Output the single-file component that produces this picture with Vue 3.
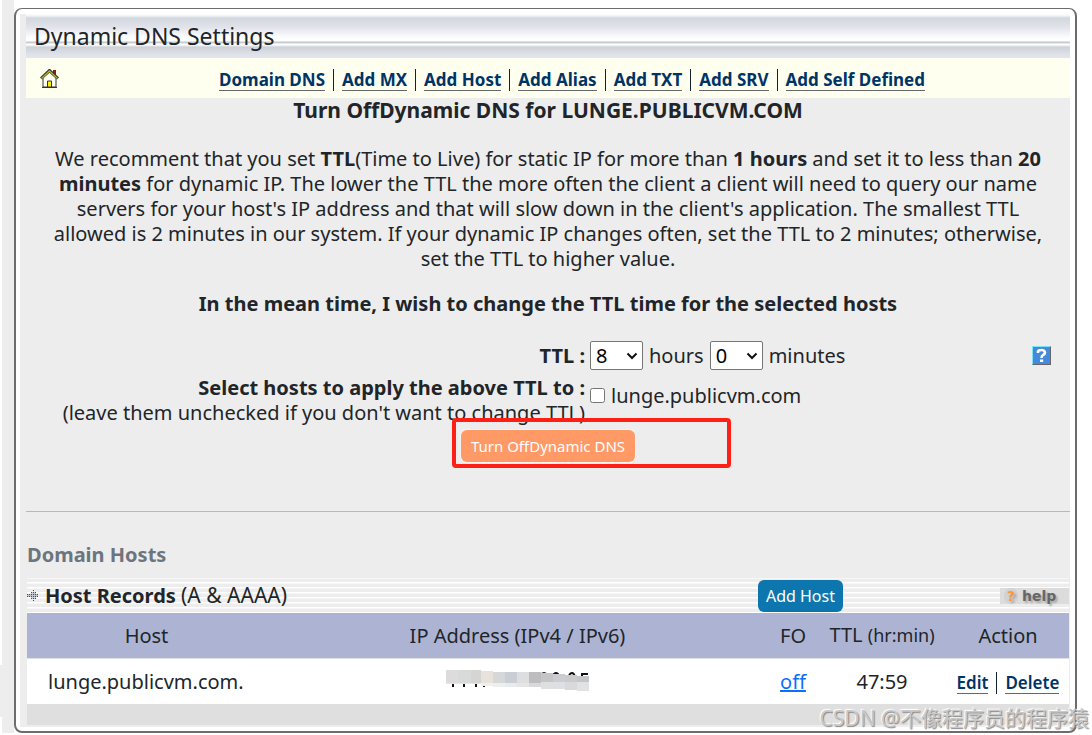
<script setup>
import { ref } from 'vue'

const links = ['Domain DNS', 'Add MX', 'Add Host', 'Add Alias', 'Add TXT', 'Add SRV', 'Add Self Defined']
const hours = ref('8')
const minutes = ref('0')
const applyHost = ref(false)
const hourOptions = Array.from({ length: 24 }, (_, i) => String(i))
const minuteOptions = Array.from({ length: 60 }, (_, i) => String(i))

const arrowDots = [
  [6, 0], [6, 10], [4, 2], [6, 2], [8, 2], [4, 8], [6, 8], [8, 8],
  [0, 4], [2, 4], [4, 4], [6, 4], [8, 4], [10, 4],
  [0, 6], [2, 6], [4, 6], [6, 6], [8, 6], [10, 6]
]

const mosaic = [
  [0, 0, 12, 13, '#dcdcdc'], [12, 0, 13, 13, '#d8d9d9'], [25, 0, 10, 14, '#d5d6d4'],
  [35, 1, 12, 12, '#e8e2dd'], [47, 2, 12, 11, '#d6d7d9'], [59, 2, 12, 11, '#c9cdd4'],
  [71, 2, 12, 11, '#dddee0'], [83, 2, 12, 11, '#bdbdbf'], [95, 3, 12, 10, '#c5c5c7'],
  [107, 4, 12, 9, '#cccdd0'], [119, 5, 12, 8, '#cbcbcd'], [131, 6, 12, 7, '#c5c6c8'],
  [0, 13, 35, 1, '#e6e6e6'],
  [35, 13, 12, 3, '#f4eeea'], [47, 13, 12, 4, '#edeeee'], [59, 13, 12, 4, '#e8eaeb'],
  [71, 13, 12, 4, '#e5e5e5'], [83, 13, 12, 4, '#d9d9da'], [95, 12, 12, 7, '#dedfe1'],
  [107, 12, 12, 7, '#dedfe2'], [119, 12, 12, 8, '#d9d9db'], [131, 12, 12, 9, '#e1e2e4']
]
</script>

<template>
  <div class="page">
    <div class="gutter"><i></i><i></i></div>
    <main class="panel">
      <div class="inner">
        <h1>Dynamic DNS Settings</h1>
        <nav>
          <a class="home" href="#" aria-label="Home">
            <svg width="19" height="19" viewBox="0 0 19 19">
              <path d="M13 1h3v7l-3-3z" fill="#8b1a1a" />
              <path d="M3 9 9.500 3 16 9v9H3z" fill="#fffff4" stroke="#333" />
              <path d="M1 9.500 9.500 1.500 18 9.500" fill="none" stroke="#333" stroke-width="3" />
              <path d="M1.500 9.500 9.500 2 17.500 9.500" fill="none" stroke="#b5b51c" stroke-width="1.300" />
              <path d="M7.500 18v-6h4v6z" fill="#ffee00" stroke="#333" />
              <path d="M2 18.500h15" stroke="#333" />
            </svg>
          </a>
          <div class="links">
            <template v-for="(l, i) in links" :key="l">
              <b v-if="i" class="bar"></b><a class="link" href="#">{{ l }}</a>
            </template>
          </div>
        </nav>
        <form @submit.prevent>
          <h2>Turn OffDynamic DNS for LUNGE.PUBLICVM.COM</h2>
          <p class="intro">
            We recomment that you set <b>TTL</b>(Time to Live) for static IP for more than <b>1 hours</b> and set it to less than <b>20 minutes</b> for dynamic IP. The lower the TTL the more often the client a client will need to query our name servers for your host's IP address and that will slow down in the client's application. The smallest TTL allowed is 2 minutes in our system. If your dynamic IP changes often, set the TTL to 2 minutes; otherwise, set the TTL to higher value.
          </p>
          <p class="wish"><b>In the mean time, I wish to change the TTL time for the selected hosts</b></p>
          <div class="fields">
            <label class="name" for="hours"><b>TTL :</b></label>
            <div class="control">
              <span class="pick"><select id="hours" v-model="hours"><option v-for="h in hourOptions" :key="h">{{ h }}</option></select><svg width="12" height="8" viewBox="0 0 12 8"><path d="M1.500 1.500 6 6l4.500-4.500" fill="none" stroke="#111" stroke-width="2" /></svg></span>
              <label for="hours">hours</label>
              <span class="pick"><select id="minutes" v-model="minutes"><option v-for="m in minuteOptions" :key="m">{{ m }}</option></select><svg width="12" height="8" viewBox="0 0 12 8"><path d="M1.500 1.500 6 6l4.500-4.500" fill="none" stroke="#111" stroke-width="2" /></svg></span>
              <label for="minutes">minutes</label>
              <a class="tip" href="#" aria-label="TTL help">
                <svg width="19" height="19" viewBox="0 0 19 19">
                  <path d="M0 0h19v19H0z" fill="#666" />
                  <path d="M0 0h19l-1 1v17H1l-1 1z" fill="#7de4f5" />
                  <path d="M1 1h17v17H1z" fill="#4489dc" />
                  <path d="M6 7V5.500Q6.500 4 9.500 4t3.500 2.500q0 1.500-1.700 2.300Q9.500 9.700 9.500 12" fill="none" stroke="#fff" stroke-width="2.600" />
                  <path d="M8 13.500h3.200V16H8z" fill="#fff" />
                </svg>
              </a>
            </div>
            <div class="name"><b>Select hosts to apply the above TTL to :</b><br />(leave them unchecked if you don't want to change TTL)</div>
            <div class="control"><input id="host" v-model="applyHost" type="checkbox" /><label for="host">lunge.publicvm.com</label></div>
          </div>
          <div class="submit">
            <span class="anchor"><button type="submit" class="off">Turn OffDynamic DNS</button><span class="mark"></span></span>
          </div>
        </form>
        <hr />
        <section>
          <h3>Domain Hosts</h3>
          <header>
            <svg class="dots" width="12" height="12" viewBox="0 0 12 12">
              <rect v-for="(d, i) in arrowDots" :key="i" :x="d[0]" :y="d[1]" width="1" height="1" fill="#34495e" />
              <path d="M0 4h11v3H0zM4 2h5v7H4z" fill="#53687c" opacity=".3" />
            </svg>
            <h4>Host Records <span>(A &amp; AAAA)</span></h4>
            <button type="button" class="add">Add Host</button>
            <a class="help" href="#"><i>?</i>help</a>
          </header>
          <table>
            <colgroup><col class="c1" /><col /><col class="c3" /><col class="c4" /><col class="c5" /></colgroup>
            <thead>
              <tr><th>Host</th><th>IP Address (IPv4 / IPv6)</th><th>FO</th><th>TTL <small>(hr:min)</small></th><th>Action</th></tr>
            </thead>
            <tbody>
              <tr>
                <td class="host">lunge.publicvm.com.</td>
                <td>
                  <svg class="ip" width="143" height="22" viewBox="0 0 143 22" aria-label="Hidden address">
                    <path d="M6 12h2v5H6zM17 12h2v5h-2zM29 14h2v3h-2zM37 14h2v3h-2z" fill="#111" />
                    <path d="M95 5q1-2 3-2t3 2M107 6q1-3 3-3t3 3M123 6q1-3 3-3t3 4M142 4h-6v4" fill="none" stroke="#111" stroke-width="2" />
                    <rect v-for="(m, i) in mosaic" :key="i" :x="m[0]" :y="m[1]" :width="m[2]" :height="m[3]" :fill="m[4]" />
                  </svg>
                </td>
                <td><a class="fo" href="#">off</a></td>
                <td>47:59</td>
                <td><div class="links"><a class="link" href="#">Edit</a><b class="bar"></b><a class="link" href="#">Delete</a></div></td>
              </tr>
            </tbody>
          </table>
          <div class="foot"></div>
        </section>
      </div>
    </main>
    <div class="watermark">CSDN @不像程序员的程序猿</div>
  </div>
</template>

<style>
body { background: #fff; }
</style>

<style scoped>
* { box-sizing: border-box; }
.page {
  position: relative;
  display: grid;
  grid-template-columns: 14px 1fr;
  padding-right: 15px;
  padding-bottom: 2px;
  min-height: 100vh;
  font: 20px/25px "Noto Sans", "Noto Sans CJK SC", sans-serif;
  color: #212529;
}
.gutter { background: #ededed; display: flex; flex-direction: column; align-items: flex-start; }
.gutter i { width: 2px; background: #fff; height: 16px; }
.gutter i:first-child { flex: 1; height: auto; margin-bottom: 52px; }
.panel {
  margin-top: 8px;
  border: 2px solid #6d6d6d;
  border-width: 1px 2px 2px;
  border-radius: 8px;
  padding: 5px 5px 4px 4px;
  background: #fff;
}
.inner { background: #ededed; padding: 0 0 2px 6px; }
h1, h2, h3, h4, p { margin: 0; font-size: 20px; }
h1 {
  height: 44px;
  padding: 6px 8px;
  font-size: 23px;
  line-height: 32px;
  font-weight: 400;
  background: linear-gradient(#fff 0, #eef2f7 2px, #d3d7de 4px, #e0e3e9 13px, #fafcfd 23px, #fff 27px, #bfc4ca 28px, #d0d4d9 29px, #fff 30px, #fafcff 31px, #ced2d8 33px, #dee1e8 40px, #e3e6ef 44px);
}
nav {
  display: grid;
  grid-template-columns: 48px 1fr;
  align-items: center;
  height: 40px;
  background: #fffff0;
}
.home { display: flex; padding-left: 14px; }
.links { display: flex; justify-content: center; align-items: center; padding-top: 4px; }
.link {
  color: #036;
  font-size: 17px;
  font-weight: 700;
  line-height: 20px;
  text-decoration: none;
  border-bottom: 1px solid #666;
}
td .link { font-weight: 600; }
.bar { width: 1px; height: 22px; margin: 0 8px; background: #123; }
form { text-align: center; }
h2 { font-size: 21px; }
.intro { padding: 0 20px; margin-top: 23px; }
.wish { margin: 20px 0 19px; }
.fields { display: grid; grid-template-columns: 559px 1fr; column-gap: 5px; align-items: start; }
.name { text-align: right; white-space: nowrap; }
.fields > :first-child { align-self: center; }
.control { display: flex; align-items: center; gap: 6px; height: 40px; }
.pick { position: relative; display: flex; }
.pick svg { position: absolute; right: 5px; top: 11px; pointer-events: none; }
select {
  appearance: none;
  width: 53px;
  height: 29px;
  padding: 0 5px;
  border: 1px solid #767676;
  border-radius: 2px;
  background: #fff;
  color: #000;
  font: inherit;
}
input { width: 15px; height: 15px; margin: 0; }
.tip { display: flex; margin-left: auto; padding-right: 19px; }
.submit { padding-top: 5px; height: 86px; }
.anchor { position: relative; display: inline-block; }
button { border: 0; border-radius: 6px; color: #fff; font: 16px/20px "Noto Sans", sans-serif; }
.off { display: block; padding: 6px 10px; font-size: 15px; background: #f96; box-shadow: 0 0 0 1px #f7f3f1; }
.mark {
  position: absolute;
  left: -9px;
  top: -12px;
  width: 279px;
  height: 50px;
  border: 4px solid #ff2015;
  border-radius: 4px;
  pointer-events: none;
}
hr { margin: 0; border: 0; height: 1px; background: #b7b9b9; }
section { padding: 30px 1px 0; }
h3 { color: #6c757d; }
header {
  display: flex;
  align-items: center;
  height: 35px;
  margin-top: 11px;
  background: repeating-linear-gradient(#f6f6f6 0 1px, #ededed 1px 4px, #fff 4px 5px);
}
h4 { margin-left: 6px; }
h4 span { font-size: 21px; font-weight: 400; }
.add { margin-left: auto; padding: 6px 8px; background: #0d76ae; }
.help {
  display: flex;
  align-items: center;
  gap: 4px;
  width: 69px;
  height: 16px;
  margin-left: 157px;
  padding-left: 4px;
  background: #dcdcdc;
  color: #666;
  font: bold 14px/16px "DejaVu Sans", sans-serif;
  text-decoration: none;
  text-shadow: 2px 2px 2px #aaa;
}
.help i { width: 14px; border-radius: 7px; background: #d2d2d2; color: #f93; font-style: normal; text-align: center; }
table { width: 100%; border-collapse: collapse; table-layout: fixed; }
.c1 { width: 239px; }
.c3 { width: 48px; }
.c4 { width: 130px; }
.c5 { width: 122px; }
th { height: 45px; padding: 0; font-weight: 400; background: #adb4d3; white-space: nowrap; }
small { font-size: 18px; }
td { height: 46px; padding: 0; text-align: center; background: #fff; border-top: 1px solid #dee2e6; }
.host { text-align: left; padding-left: 21px; }
.ip { display: block; margin: 0 auto; }
.fo { color: #0d6efd; }
.foot { height: 21px; background: #dfdfdf; }
.watermark {
  position: absolute;
  right: 3px;
  bottom: 4px;
  font: 21px/26px "Noto Sans", "Noto Sans CJK SC", sans-serif;
  color: #c8c8c8;
  text-shadow: 1px 1px 1px #888, -1px -1px 1px #fff;
  white-space: nowrap;
}
</style>
